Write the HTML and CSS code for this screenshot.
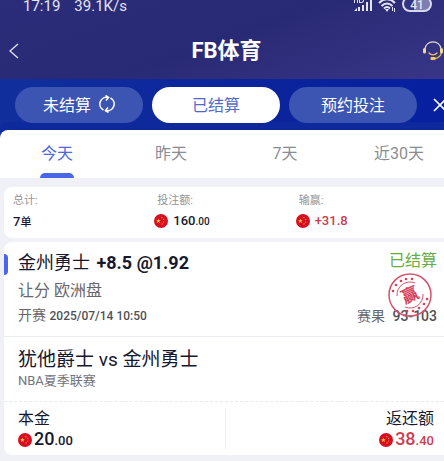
FILE: index.html
```html
<!DOCTYPE html>
<html lang="zh-CN">

<head>
    <meta charset="UTF-8">
    <meta name="viewport" content="width=device-width, initial-scale=1.0">
    <title>FB体育</title>
    <link rel="stylesheet" href="styles.css">
</head>

<body>

    <!-- Flag symbol shared by all amounts -->
    <svg class="symbols" aria-hidden="true">
        <symbol id="flag" viewBox="0 0 14 14">
            <circle cx="7" cy="7" r="7" fill="#d80f22" />
            <path d="M4.400 4.600l.6 1.600h1.800L5.400 7.300l.5 1.800-1.500-1.100-1.500 1.100.5-1.800L2 6.200h1.800z" fill="#ffc83a" />
            <g fill="#ffb03a">
                <circle cx="7.900" cy="3.700" r=".6" />
                <circle cx="9.700" cy="5.400" r=".6" />
                <circle cx="9.700" cy="8" r=".6" />
                <circle cx="8" cy="9.900" r=".6" />
            </g>
        </symbol>
    </svg>

    <header class="top">
        <div class="status-bar">
            <span>17:19</span>
            <span class="speed">39.1K/s</span>
            <svg class="signal" width="19" height="17" viewBox="0 0 19 17" fill="#e4e4f2">
                <path d="M1 2h1v2h2V2h1v6H4V5H2v3H1zM6 2h2c2 0 3 1 3 3S10 8 8 8H6zm1 1v4h1c1 0 2-.5 2-2S9 3 8 3z" />
                <path d="M1 16l3-3v3zM5 12h2v4H5zM9 10h2v6H9zM13 7h2v9h-2zM17 4h2v12h-2z" />
            </svg>
            <svg class="wifi" width="18" height="17" viewBox="0 0 18 17" fill="none" stroke="#e4e4f2" stroke-width="2">
                <path d="M1 8c5-5 11-5 16 0M3.500 11c3.500-3.500 7.500-3.500 11 0M6 13.500c2-2 4-2 6 0" />
                <path d="M7 14h4l-2 3z" fill="#e4e4f2" stroke="none" />
                <path d="M14.500 12v4M16.500 13v4" stroke-width="1" />
            </svg>
            <span class="battery">41</span>
        </div>
        <div class="nav">
            <button class="icon-btn back" aria-label="返回">
                <svg width="10" height="16" viewBox="0 0 10 16" fill="none" stroke="#dcdcec" stroke-width="1.500"><path d="M9 1L1 8l8 7" /></svg>
            </button>
            <h1>FB体育</h1>
            <button class="icon-btn service" aria-label="客服">
                <svg width="22" height="20" viewBox="0 0 22 20" fill="none" stroke-linecap="round">
                    <path d="M3 8C4-1.500 18-1.500 19 8" stroke="#e9dfd0" stroke-width="1.300" />
                    <path d="M19.500 12c-1 3-3 5-6.500 5.500" stroke="#d9b45d" stroke-width="1.300" />
                    <path d="M2.500 8.500v2.500M19.500 8.500v2.500" stroke="#f2d892" stroke-width="3" />
                    <path d="M7 12c2 2.500 6 2.500 8 0" stroke="#e9c069" stroke-width="1.300" />
                    <rect x="8.500" y="16" width="5" height="3" rx="1" fill="#f3c95f" />
                </svg>
            </button>
        </div>
    </header>

    <nav class="filters">
        <button class="pill">未结算
            <svg width="16" height="18" viewBox="0 0 16 18" fill="none" stroke="#fff" stroke-width="1.600">
                <path d="M9 2.500A6.700 6.700 0 0 0 4.500 15M7 15.500A6.700 6.700 0 0 0 11.500 3" />
                <path d="M6.500.5L9.500 2.500 7 5.500M9.500 17.500l-3-2L9 12.500" />
            </svg>
        </button>
        <button class="pill active">已结算</button>
        <button class="pill">预约投注</button>
        <button class="icon-btn close" aria-label="关闭">
            <svg width="14" height="14" viewBox="0 0 14 14" stroke="#fff" stroke-width="1.600"><path d="M1 1l12 12M13 1L1 13" /></svg>
        </button>
    </nav>

    <main>
        <div class="tabs">
            <div class="tab-list">
                <button class="tab active">今天</button>
                <button class="tab">昨天</button>
                <button class="tab">7天</button>
                <button class="tab">近30天</button>
            </div>
        </div>

        <section class="summary">
            <div>
                <p class="label">总计:</p>
                <p class="value">7<small>单</small></p>
            </div>
            <div>
                <p class="label">投注额:</p>
                <p class="value money"><svg class="flag"><use href="#flag" /></svg><span>160<small>.00</small></span></p>
            </div>
            <div>
                <p class="label">输赢:</p>
                <p class="value money win"><svg class="flag"><use href="#flag" /></svg><span>+31.8</span></p>
            </div>
        </section>

        <article class="bet">
            <div class="pick">
                <div class="row">
                    <h2>金州勇士 <b>+8.5 @1.92</b></h2>
                    <span class="settled">已结算</span>
                </div>
                <p class="market">让分 欧洲盘</p>
                <div class="row time">
                    <span>开赛 <b>2025/07/14 10:50</b></span>
                    <span class="result">赛果 <b>93-103</b></span>
                </div>
                <svg class="stamp" viewBox="0 0 44 44" fill="none" stroke="#d5536c">
                    <circle cx="22" cy="22" r="21" stroke-width="1.500" />
                    <g fill="#d5405c" stroke="none">
                        <circle cx="5" cy="18" r="1.300" />
                        <circle cx="8" cy="12" r="1.300" />
                        <circle cx="13" cy="8" r="1.300" />
                        <circle cx="18" cy="6" r="1.300" />
                        <circle cx="24" cy="6" r="1.300" />
                        <circle cx="39" cy="26" r="1.300" />
                        <circle cx="36" cy="31" r="1.300" />
                        <circle cx="31" cy="35" r="1.300" />
                        <circle cx="25" cy="38" r="1.300" />
                        <circle cx="19" cy="38" r="1.300" />
                    </g>
                    <path d="M9 23A13 13 0 0 1 27 10M35 21A13 13 0 0 1 17 34" stroke-width="1" />
                    <text x="22" y="28" transform="rotate(-25 22 22)" text-anchor="middle" fill="#d5405c" stroke="none">赢</text>
                </svg>
            </div>
            <div class="match">
                <h3>犹他爵士 vs 金州勇士</h3>
                <p>NBA夏季联赛</p>
            </div>
            <div class="amounts">
                <div class="stake">
                    <p>本金</p>
                    <p class="total"><svg class="flag"><use href="#flag" /></svg><span>20<small>.00</small></span></p>
                </div>
                <div class="payout">
                    <p>返还额</p>
                    <p class="total win"><svg class="flag"><use href="#flag" /></svg><span>38<small>.40</small></span></p>
                </div>
            </div>
        </article>
    </main>

</body>

</html>
```

FILE: styles.css
```css
* {
    box-sizing: border-box;
}

body {
    margin: 0;
    font-family: Roboto, 'Noto Sans CJK SC', sans-serif;
    background-color: #eff1f6;
    color: #17182f;
    overflow: hidden;
}

h1,
h2,
h3,
p {
    margin: 0;
    font-weight: 400;
}

button {
    padding: 0;
    border: none;
    background: none;
    font-family: inherit;
    cursor: pointer;
}

svg {
    display: block;
    flex-shrink: 0;
}

.symbols {
    display: none;
}

/* Top bar */
.top {
    background: linear-gradient(160deg, #2c2d7a, #292a75 50%, #383587);
    color: white;
}

.status-bar {
    display: flex;
    align-items: flex-end;
    height: 12px;
    padding: 0 12px 0 23px;
    font-size: 15px;
    line-height: 12px;
    color: #e4e4f2;
}

.speed {
    margin-left: 14px;
}

.signal {
    margin-left: auto;
}

.wifi {
    margin-left: 6px;
}

.battery {
    width: 30px;
    height: 16px;
    margin-left: 6px;
    border: 2px solid #d8d8ea;
    border-radius: 8px;
    background: linear-gradient(90deg, #33347f 40%, #7c7db0 40%);
    font-size: 12px;
    font-weight: 500;
    line-height: 14px;
    text-align: center;
}

.nav {
    display: flex;
    align-items: center;
    justify-content: space-between;
    height: 67px;
    padding: 11px 0 0 9px;
}

.nav h1 {
    font-size: 22px;
    font-weight: 700;
    line-height: 26px;
}

.back {
    width: 22px;
}

.filters {
    display: flex;
    align-items: center;
    gap: 9px;
    height: 51px;
    padding-left: 15px;
    background: linear-gradient(90deg, #112f9c, #0b249c 60%, #0620a0);
}

.pill {
    display: flex;
    flex: 1;
    align-items: center;
    justify-content: center;
    gap: 8px;
    height: 36px;
    padding-bottom: 2px;
    border-radius: 18px;
    background-color: #3c54b2;
    color: white;
    font-size: 16px;
}

.pill.active {
    background-color: white;
    color: #5469ca;
}

.close {
    width: 18px;
    padding-left: 7px;
}

/* Day tabs */
.tabs {
    overflow: hidden;
    background-color: white;
    border-radius: 8px 0 0 0;
    box-shadow: 0 -8px 0 #0d299c;
}

.tab-list {
    display: grid;
    grid-template-columns: repeat(4, 1fr);
    margin-right: -12px;
}

.tab {
    display: flex;
    flex-direction: column;
    align-items: center;
    justify-content: flex-end;
    height: 48px;
    color: #8c8d92;
    font-size: 16px;
    line-height: 24px;
}

.tab::after {
    content: '';
    width: 34px;
    height: 5px;
    margin-top: 7px;
    border-radius: 5px 5px 0 0;
}

.tab.active {
    color: #5068dc;
}

.tab.active::after {
    background-color: #4967e8;
}

/* Totals */
.summary {
    display: grid;
    grid-template-columns: repeat(3, 1fr);
    margin: 9px 0 4px 4px;
    padding: 5px 7px 6px 9px;
    background-color: white;
    border-radius: 8px 0 0 8px;
}

.label {
    color: #94959a;
    font-size: 11px;
    line-height: 18px;
}

.summary div + div .label {
    padding-left: 3px;
}

.value {
    height: 22px;
    font-size: 13px;
    font-weight: 500;
    line-height: 24px;
}

.value small {
    font-size: 11px;
}

.money,
.total {
    display: flex;
    align-items: center;
}

.money {
    gap: 5px;
}

.money small {
    font-size: 10px;
}

.flag {
    width: 14px;
    height: 14px;
}

.win {
    color: #c93e50;
}

/* Bet card */
.bet {
    margin-left: 4px;
    background-color: white;
    border-radius: 8px 0 0 8px;
}

.row {
    display: flex;
    align-items: center;
    justify-content: space-between;
}

.pick {
    position: relative;
    padding: 5px 7px 7px 14px;
    border-bottom: 1px solid #e8eaef;
}

.pick::before {
    content: '';
    position: absolute;
    top: 12px;
    left: 0;
    width: 4px;
    height: 21px;
    border-radius: 0 4px 4px 0;
    background-color: #4967e8;
}

.pick h2 {
    font-size: 18px;
    line-height: 32px;
}

.pick h2 b {
    margin-left: 2px;
    font-weight: 700;
}

.settled {
    align-self: flex-start;
    color: #68ad3f;
    font-size: 16px;
    line-height: 28px;
}

.market {
    color: #66676e;
    font-size: 16px;
    line-height: 24px;
}

.time {
    color: #66676e;
    font-size: 14px;
    line-height: 25px;
}

.time b {
    color: #505158;
    font-size: 12px;
    font-weight: 500;
}

.time .result b {
    margin-left: 4px;
    font-size: 14px;
}

.stamp {
    position: absolute;
    top: 31px;
    right: 12px;
    width: 44px;
    height: 44px;
    font-size: 17px;
    font-weight: 700;
}

.match {
    padding: 11px 7px 11px 14px;
    border-bottom: 1px dashed #e8eaef;
}

.match h3 {
    font-size: 19px;
    line-height: 24px;
}

.match p {
    color: #74757c;
    font-size: 13px;
    line-height: 18px;
}

.amounts {
    display: grid;
    grid-template-columns: 1fr 1fr;
    padding: 6px 10px 5px 14px;
    font-size: 16px;
    line-height: 22px;
}

.stake {
    border-right: 1px solid #eff0f4;
}

.total {
    gap: 2px;
    height: 20px;
    font-size: 18px;
    font-weight: 500;
}

.total small {
    font-size: 13px;
}

.payout {
    display: flex;
    flex-direction: column;
    align-items: flex-end;
}
```
